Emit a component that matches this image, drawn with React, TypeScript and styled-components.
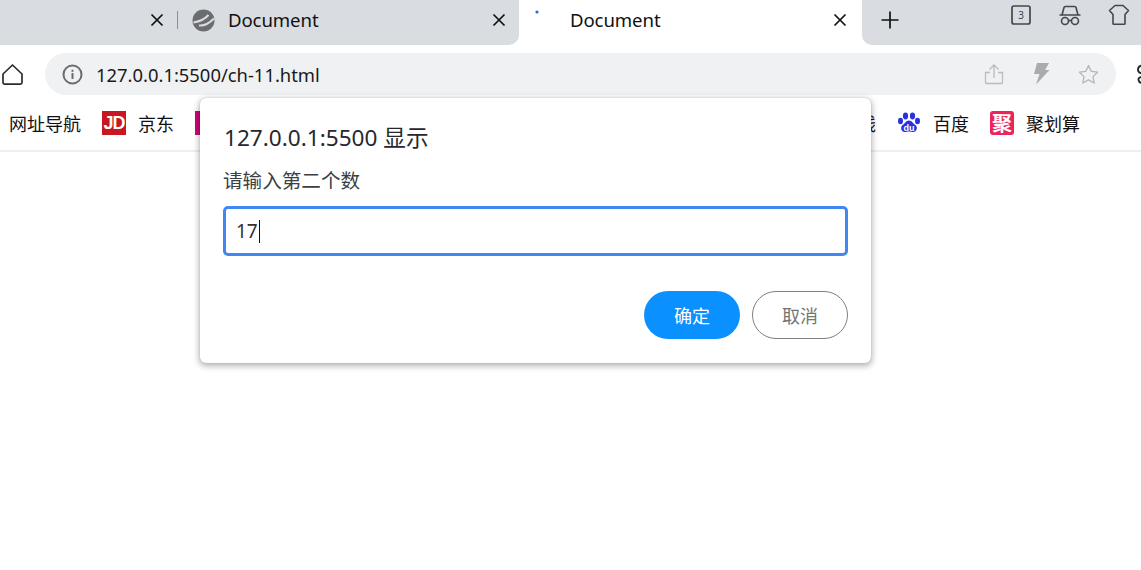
import React from "react";
import styled, { createGlobalStyle } from "styled-components";

const Global = createGlobalStyle`
  html, body { margin: 0; padding: 0; background: #fff; }
  body { width: 1141px; height: 570px; overflow: hidden; font-family: "Noto Sans", "Noto Sans CJK SC", sans-serif; }
`;
const Page = styled.div`position: relative; width: 1141px; height: 570px; overflow: hidden; background: #fff;`;
const TabStrip = styled.div`display: flex; height: 45px; background: #fff;`;
const InactiveTabs = styled.div`display: flex; width: 519px; background: #d9dce0; border-bottom-right-radius: 10px; align-items: center;`;
const Tab = styled.div<{ $w: number; $pr: number; $active?: boolean }>`
  display: flex; align-items: center; width: ${p => p.$w}px; height: 45px; box-sizing: border-box; padding: 0 ${p => p.$pr}px 5px 0;
  background: ${p => (p.$active ? "#fff" : "transparent")}; flex: none;
`;
const TabTitle = styled.span`font-size: 18.6px; color: #111; line-height: 1; margin-left: 13px; flex: 1; white-space: nowrap; letter-spacing: -.1px;`;
const Stub = styled.div`flex: 1;`;
const Sep = styled.div`width: 1px; height: 18px; background: #8b8e92; flex: none; margin-left: 12px;`;
const FaviconSlot = styled.div<{ $ml: number }>`margin-left: ${p => p.$ml}px; width: 23px; height: 23px; flex: none; display: flex;`;
const TabControls = styled.div`flex: 1; display: flex; align-items: center; background: #d9dce0; border-bottom-left-radius: 10px; height: 45px; padding: 0 0 5px 18px; box-sizing: border-box;`;
const Tray = styled.div`display: flex; gap: 26px; margin-left: auto; margin-right: 11px; align-self: flex-start; padding-top: 4px;`;
const Toolbar = styled.div`display: flex; height: 58px; padding-top: 8px; box-sizing: border-box; align-items: flex-start;`;
const HomeBtn = styled.div`width: 45px; height: 42px; flex: none; display: flex; align-items: center; padding-left: 2px; box-sizing: border-box;`;
const Omnibox = styled.div`width: 1071px; height: 42px; flex: none; background: #f0f1f3; border-radius: 21px; display: flex; align-items: center; padding: 0 17px 0 17px; box-sizing: border-box;`;
const Url = styled.span`font-size: 18.4px; color: #1a1a1a; margin-left: 13px; flex: 1; white-space: nowrap;`;
const OmniIcons = styled.div`display: flex; gap: 28.5px; align-items: center;`;
const ExtClip = styled.div`flex: none; margin-left: 20px; height: 42px; display: flex; align-items: center;`;
const Bookmarks = styled.div`display: flex; align-items: center; height: 49px; border-bottom: 2px solid #eeeff1; box-sizing: border-box; padding: 0 0 7px 9px; font-size: 18px; color: #111;`;
const Mark = styled.div<{ $ml?: number }>`display: flex; align-items: center; gap: 12px; margin-left: ${p => p.$ml ?? 0}px; white-space: nowrap; flex: none;`;
const MarkBadge = styled.div<{ $bg: string; $r?: number }>`
  width: 24px; height: 24px; background: ${p => p.$bg}; border-radius: ${p => p.$r ?? 0}px; color: #fff; font-weight: 700;
  display: flex; align-items: center; justify-content: center; line-height: 1; flex: none;
`;
const JdText = styled.span`font-size: 18px; letter-spacing: -1px; font-family: "Liberation Sans", sans-serif; font-weight: 700;`;
const JuText = styled.span`font-size: 20px; font-family: "Noto Sans CJK SC", sans-serif;`;
const Right = styled.div`margin-left: auto; display: flex; align-items: center; padding-right: 61px;`;
const Hidden = styled.span`margin-right: 21px;`;
const Dialog = styled.div`
  position: absolute; left: 200px; top: 98px; width: 671px; height: 265px; box-sizing: border-box; background: #fff; border-radius: 6px;
  box-shadow: 0 2px 6px 1px rgba(0,0,0,.3), 0 0 1px rgba(0,0,0,.25); padding: 23px; display: flex; flex-direction: column;
`;
const DialogTitle = styled.div`font-size: 22.6px; line-height: 34px; color: #26282c; height: 34px; margin-left: 1px;`;
const DialogMsg = styled.div`font-size: 19.6px; line-height: 28px; color: #3c3f44; margin-top: 12px;`;
const PromptField = styled.div`
  height: 50px; margin-top: 11px; box-sizing: border-box; border: 3px solid #4286f4; border-radius: 5px; display: flex; align-items: center;
  padding-left: 10px; font-size: 19px; color: #333;
`;
const Caret = styled.span`display: inline-block; width: 1px; height: 23px; background: #111; margin-left: 1px;`;
const Actions = styled.div`display: flex; justify-content: flex-end; gap: 12px; margin-top: 35px;`;
const Btn = styled.div<{ $primary?: boolean }>`
  width: 96px; height: 48px; box-sizing: border-box; border-radius: 24px; display: flex; align-items: center; justify-content: center; font-size: 18px;
  background: ${p => (p.$primary ? "#0a90ff" : "#fff")}; color: ${p => (p.$primary ? "#fff" : "#757575")};
  border: ${p => (p.$primary ? "none" : "1px solid #808080")};
`;

const Close = () => (
  <svg width="16" height="16" viewBox="0 0 16 16" fill="none" stroke="#111" strokeWidth="1.7" style={{ flex: "none" }}>
    <path d="M2.5 2.5l11 11M13.5 2.5l-11 11" />
  </svg>
);
const EdgeLogo = () => (
  <svg width="23" height="23" viewBox="0 0 23 23">
    <circle cx="11.5" cy="11.5" r="11" fill="#6a6c6f" />
    <path d="M1.500 13.500 C7 12.500 13 10 16.500 6" fill="none" stroke="#d9dce0" strokeWidth="2" />
    <path d="M7 16.500 C11 17 16.500 15 22 9.500" fill="none" stroke="#d9dce0" strokeWidth="2" />
  </svg>
);
const Plus = () => (
  <svg width="20" height="20" viewBox="0 0 20 20" stroke="#111" strokeWidth="1.7"><path d="M10 1.500v17M1.500 10h17" /></svg>
);
const TabCount = () => (
  <svg width="22" height="22" viewBox="0 0 22 22">
    <rect x="2" y="2" width="18" height="18" rx="2" fill="none" stroke="#44474b" strokeWidth="1.7" />
    <text x="11" y="14.500" textAnchor="middle" fontSize="10" fill="#3f3f55" fontFamily="Noto Sans">3</text>
  </svg>
);
const Incognito = () => (
  <svg width="24" height="22" viewBox="0 0 24 22" fill="none" stroke="#44474b" strokeWidth="1.600">
    <path d="M1.500 11h21M4 11l2-7.500c.2-.7.6-1 1.300-1h9.400c.7 0 1.100.3 1.300 1l2 7.500" />
    <circle cx="7" cy="17" r="3.500" /><circle cx="17" cy="17" r="3.500" /><path d="M10.500 16.500h3" />
  </svg>
);
const Shirt = () => (
  <svg width="22" height="22" viewBox="0 0 22 22" fill="none" stroke="#44474b" strokeWidth="1.600" strokeLinejoin="round">
    <path d="M7 1.500h8l5.500 5-3.500 4v9c0 .5-.3.800-.8.800H5.800c-.5 0-.8-.3-.8-.8v-9l-3.500-4z" />
  </svg>
);
const Home = () => (
  <svg width="21" height="21" viewBox="0 0 21 21" fill="none" stroke="#2a2c2f" strokeWidth="1.700" strokeLinejoin="round">
    <path d="M1 10L10.500 1 20 10v8.500c0 1-.7 1.600-1.600 1.600H2.600c-.9 0-1.600-.6-1.600-1.600z" />
  </svg>
);
const Info = () => (
  <svg width="21" height="21" viewBox="0 0 21 21" fill="none">
    <circle cx="10.500" cy="10.500" r="9" stroke="#696c70" strokeWidth="2" />
    <rect x="9.500" y="9" width="2" height="6" fill="#696c70" /><rect x="9.500" y="5.800" width="2" height="2" fill="#696c70" />
  </svg>
);
const Share = () => (
  <svg width="20" height="22" viewBox="0 0 20 22" fill="none" stroke="#b9bbbe" strokeWidth="1.300">
    <path d="M10 15V2M5.500 6.500L10 2l4.500 4.500M6 9.500H1.500v10c0 .6.400 1 1 1h15c.6 0 1-.4 1-1v-10H14" />
  </svg>
);
const Bolt = () => (
  <svg width="17" height="22" viewBox="0 0 17 22"><path d="M4 0h12l-4 7h4.500L3 21.500 6.500 11H1z" fill="#a9abae" /></svg>
);
const Star = () => (
  <svg width="21" height="21" viewBox="0 0 21 21" fill="none" stroke="#b4b6b9" strokeWidth="1.300" strokeLinejoin="round">
    <path d="M10.500 1.500l2.800 5.900 6.300.8-4.600 4.400 1.200 6.400-5.700-3.100-5.700 3.100 1.200-6.400L1.400 8.200l6.300-.8z" />
  </svg>
);
const Puzzle = () => (
  <svg width="20" height="22" viewBox="0 0 20 22" fill="none" stroke="#222" strokeWidth="1.800">
    <path d="M7 2.500Q2 2.500 2 6.500 2 10 6 10.500M7 14Q2 14 2.500 17 3 20 7 20" />
  </svg>
);
const Paw = () => (
  <svg width="24" height="24" viewBox="0 0 24 24" fill="#2932e1">
    <ellipse cx="8.500" cy="5" rx="2.600" ry="3.400" /><ellipse cx="15.500" cy="5" rx="2.600" ry="3.400" />
    <ellipse cx="3.500" cy="10" rx="2.500" ry="3.200" /><ellipse cx="20.500" cy="10" rx="2.500" ry="3.200" />
    <path d="M12 9.500c3 0 4 3 6.500 4.500 2.500 2 1.500 7-2.500 7-1.500 0-2.500-.5-4-.5s-2.500.5-4 .5c-4 0-5-5-2.500-7C8 12.500 9 9.500 12 9.500z" />
    <text x="12" y="19.500" textAnchor="middle" fontSize="9" fontWeight="700" fill="#fff" fontFamily="Liberation Sans">du</text>
  </svg>
);

export default function App() {
  return (
    <Page>
      <Global />
      <TabStrip>
        <InactiveTabs>
          <Tab $w={178} $pr={0}>
            <Stub />
            <Close />
            <Sep />
          </Tab>
          <Tab $w={341} $pr={12}>
            <FaviconSlot $ml={14}><EdgeLogo /></FaviconSlot>
            <TabTitle>Document</TabTitle>
            <Close />
          </Tab>
        </InactiveTabs>
        <Tab $w={343} $pr={14} $active>
          <FaviconSlot $ml={15}>
            <svg width="23" height="23" viewBox="0 0 23 23"><circle cx="3" cy="3" r="1.600" fill="#1670e6" /></svg>
          </FaviconSlot>
          <TabTitle>Document</TabTitle>
          <Close />
        </Tab>
        <TabControls>
          <Plus />
          <Tray>
            <TabCount />
            <Incognito />
            <Shirt />
          </Tray>
        </TabControls>
      </TabStrip>
      <Toolbar>
        <HomeBtn><Home /></HomeBtn>
        <Omnibox>
          <Info />
          <Url>127.0.0.1:5500/ch-11.html</Url>
          <OmniIcons>
            <Share />
            <Bolt />
            <Star />
          </OmniIcons>
        </Omnibox>
        <ExtClip><Puzzle /></ExtClip>
      </Toolbar>
      <Bookmarks>
        <Mark>网址导航</Mark>
        <Mark $ml={21}><MarkBadge $bg="#c81623"><JdText>JD</JdText></MarkBadge>京东</Mark>
        <Mark $ml={21}><MarkBadge $bg="#d1047a" /></Mark>
        <Right>
          <Hidden>线</Hidden>
          <Mark><Paw />百度</Mark>
          <Mark $ml={21}><MarkBadge $bg="#ed2458" $r={3}><JuText>聚</JuText></MarkBadge>聚划算</Mark>
        </Right>
      </Bookmarks>
      <Dialog>
        <DialogTitle>127.0.0.1:5500 显示</DialogTitle>
        <DialogMsg>请输入第二个数</DialogMsg>
        <PromptField>17<Caret /></PromptField>
        <Actions>
          <Btn $primary>确定</Btn>
          <Btn>取消</Btn>
        </Actions>
      </Dialog>
    </Page>
  );
}
